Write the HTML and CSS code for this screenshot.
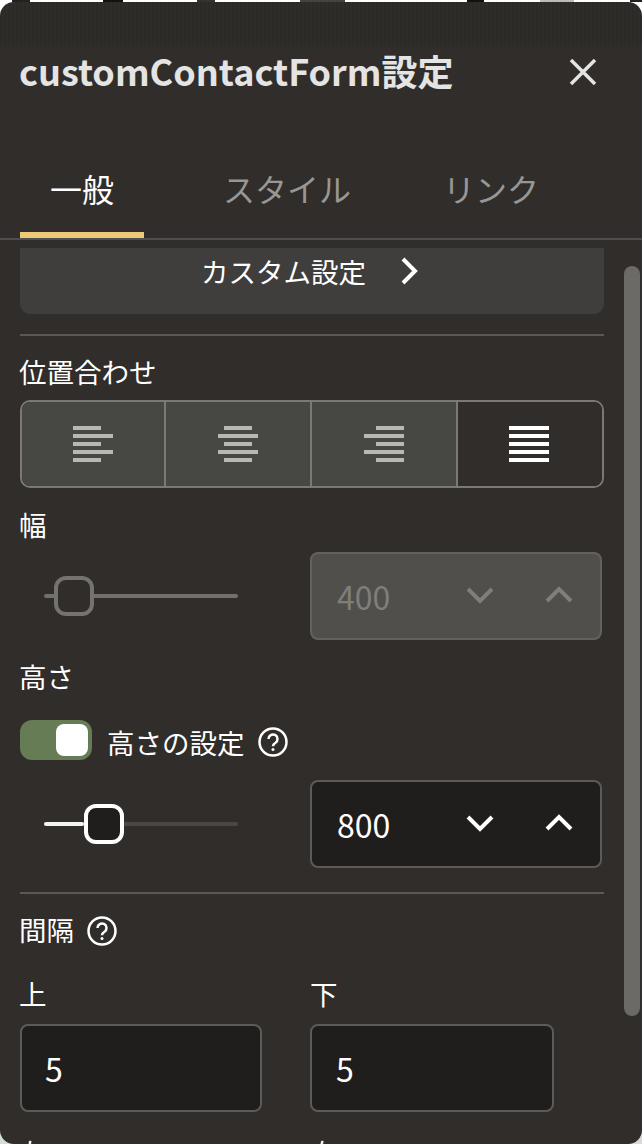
FILE: index.html
```html
<!DOCTYPE html>
<html lang="ja">
<head>
    <meta charset="UTF-8">
    <meta name="viewport" content="width=device-width, initial-scale=1.0">
    <title>customContactForm設定</title>
    <link rel="stylesheet" href="styles.css">
</head>
<body>
    <div class="page-behind"></div>

    <div class="panel">
        <div class="panel-head">
            <div class="panel-title">customContactForm設定</div>
            <svg class="close-icon" width="28" height="28" viewBox="0 0 28 28">
                <path d="M2 2L26 26M26 2L2 26"/>
            </svg>
        </div>

        <div class="tabs">
            <div class="tab tab-active">一般</div>
            <div class="tab tab-style">スタイル</div>
            <div class="tab tab-link">リンク</div>
        </div>

        <div class="scroll-area">
            <div class="custom-btn">
                <span>カスタム設定</span>
                <svg class="chevron-right" width="18" height="28" viewBox="0 0 18 28">
                    <path d="M3 2L15 14L3 26"/>
                </svg>
            </div>

            <div class="divider"></div>

            <div class="label label-first">位置合わせ</div>
            <div class="align-group">
                <div class="align-btn">
                    <div class="bars bars-left"><i></i><i></i><i></i><i></i><i></i></div>
                </div>
                <div class="align-btn">
                    <div class="bars bars-center"><i></i><i></i><i></i><i></i><i></i></div>
                </div>
                <div class="align-btn">
                    <div class="bars bars-right"><i></i><i></i><i></i><i></i><i></i></div>
                </div>
                <div class="align-btn align-active">
                    <div class="bars bars-full"><i></i><i></i><i></i><i></i><i></i></div>
                </div>
            </div>

            <div class="label label-width">幅</div>
            <div class="slider-row is-disabled">
                <div class="slider">
                    <div class="track">
                        <div class="thumb"></div>
                    </div>
                </div>
                <div class="number-box">
                    <span class="number-value">400</span>
                    <svg class="stepper" width="28" height="18" viewBox="0 0 28 18"><path d="M2 3L14 15L26 3"/></svg>
                    <svg class="stepper" width="28" height="18" viewBox="0 0 28 18"><path d="M2 15L14 3L26 15"/></svg>
                </div>
            </div>

            <div class="label label-height">高さ</div>
            <div class="toggle-row">
                <div class="toggle"><div class="toggle-knob"></div></div>
                <span class="toggle-text">高さの設定</span>
                <svg class="help-icon" width="30" height="30" viewBox="0 0 30 30">
                    <circle cx="15" cy="15" r="13.5"/>
                    <path d="M10.5 12a4.5 4.5 0 1 1 7 3.7c-1.6 1-2.5 1.8-2.5 3.6"/>
                    <circle class="help-dot" cx="15" cy="22.5" r="1.5"/>
                </svg>
            </div>
            <div class="slider-row slider-row-active">
                <div class="slider">
                    <div class="track">
                        <div class="track-fill"></div>
                        <div class="thumb thumb-active"></div>
                    </div>
                </div>
                <div class="number-box">
                    <span class="number-value">800</span>
                    <svg class="stepper" width="28" height="18" viewBox="0 0 28 18"><path d="M2 3L14 15L26 3"/></svg>
                    <svg class="stepper" width="28" height="18" viewBox="0 0 28 18"><path d="M2 15L14 3L26 15"/></svg>
                </div>
            </div>

            <div class="divider divider-spacing"></div>

            <div class="label label-spacing">
                間隔
                <svg class="help-icon" width="30" height="30" viewBox="0 0 30 30">
                    <circle cx="15" cy="15" r="13.5"/>
                    <path d="M10.5 12a4.5 4.5 0 1 1 7 3.7c-1.6 1-2.5 1.8-2.5 3.6"/>
                    <circle class="help-dot" cx="15" cy="22.5" r="1.5"/>
                </svg>
            </div>
            <div class="spacing-grid">
                <div class="spacing-item">
                    <div class="label">上</div>
                    <div class="spacing-input">5</div>
                </div>
                <div class="spacing-item">
                    <div class="label">下</div>
                    <div class="spacing-input">5</div>
                </div>
                <div class="spacing-item">
                    <div class="label">左</div>
                </div>
                <div class="spacing-item">
                    <div class="label">右</div>
                </div>
            </div>
        </div>

        <div class="scrollbar"></div>
    </div>
</body>
</html>
```

FILE: styles.css
```css
html,
body {
    margin: 0;
    padding: 0;
    height: 1144px;
    overflow: hidden;
}

body {
    font-family: "Noto Sans CJK JP", "Noto Sans", sans-serif;
    background: linear-gradient(#ffffff 50%, #d3dcd9 50%);
    color: #ffffff;
}

/* the page under the panel, only its last 2px show */
.page-behind {
    height: 2px;
    background: linear-gradient(90deg,
        #fff 0, #fff 12px, #222 12px, #222 30px, #fff 30px, #fff 103px,
        #111 103px, #111 123px, #fff 123px, #fff 197px,
        #333 197px, #333 215px, #fff 215px, #fff 300px,
        #444 300px, #444 345px, #fff 345px, #fff 467px,
        #111 467px, #111 484px, #fff 484px, #fff 540px,
        #bbb 540px, #bbb 574px, #fff 574px, #fff 630px,
        #222 630px);
}

.panel {
    position: relative;
    height: 1142px;
    border-radius: 14px;
    overflow: hidden;
    background:
        repeating-linear-gradient(90deg, #2c2a27 0, #2c2a27 2px, #2f2c29 2px, #2f2c29 4px) top / 100% 43px no-repeat,
        #302d2a;
}

.panel-head {
    display: flex;
    align-items: center;
    justify-content: space-between;
    height: 54px;
    padding: 43px 45px 0 20px;
}

.panel-title {
    margin-left: -1px;
    margin-bottom: 4px;
    font-size: 36px;
    font-weight: 700;
    line-height: 54px;
    color: #e4e4e4;
    white-space: nowrap;
}

.close-icon path {
    fill: none;
    stroke: #e4e4e4;
    stroke-width: 3.5;
}

.tabs {
    display: flex;
    height: 96px;
    margin-top: 43px;
    padding-left: 20px;
    border-bottom: 2px solid #4e4e50;
}

.tab {
    padding: 0 30px;
    font-size: 32px;
    line-height: 92px;
    color: #989794;
}

.tab-active {
    color: #ffffff;
    box-shadow: inset 0 -6px 0 #edc978;
}

.tab-style {
    margin-left: 49px;
}

.tab-link {
    margin-left: 32px;
}

.scroll-area {
    height: 896px;
    margin-top: 8px;
    padding: 0 38px 0 20px;
    overflow: hidden;
}

.custom-btn {
    display: flex;
    align-items: flex-start;
    justify-content: center;
    gap: 34px;
    height: 66px;
    padding-right: 5px;
    border-radius: 0 0 10px 10px;
    background-color: #403e3c;
    font-size: 27.5px;
    line-height: 46px;
}

.chevron-right {
    margin-top: 9px;
}

.chevron-right path {
    fill: none;
    stroke: #ffffff;
    stroke-width: 4;
}

.divider {
    height: 2px;
    margin-top: 20px;
    background-color: #5a595a;
}

.divider-spacing {
    margin-top: 24px;
}

.label {
    height: 40px;
    margin-left: -1px;
    font-size: 27.5px;
    line-height: 37px;
}

.label-first {
    margin-top: 17px;
}

.label-width {
    margin-top: 18px;
}

.label-height {
    margin-top: 18px;
}

.label-spacing {
    display: flex;
    align-items: flex-start;
    gap: 13px;
    margin-top: 17px;
}

.label-spacing .help-icon {
    margin-top: 5px;
}

.align-group {
    display: grid;
    grid-template-columns: 142px 146px 146px 146px;
    height: 84px;
    margin-top: 7px;
    border: 2px solid #7a7976;
    border-radius: 10px;
    overflow: hidden;
}

.align-btn {
    display: flex;
    align-items: center;
    justify-content: center;
    background-color: #474744;
    border-left: 2px solid #7a7976;
}

.align-btn:first-child {
    border-left: none;
}

.align-active {
    padding-right: 2px;
    background-color: #302d2b;
}

.bars {
    display: flex;
    flex-direction: column;
    gap: 4px;
    width: 40px;
}

.bars i {
    display: block;
    width: 28px;
    height: 4px;
    background-color: #b8b7b3;
}

.bars i:nth-child(even) {
    width: 40px;
}

.bars-center {
    align-items: center;
}

.bars-right {
    align-items: flex-end;
}

.bars-full i {
    width: 40px;
    background-color: #ffffff;
}

.slider-row {
    display: flex;
    height: 88px;
    margin-top: 6px;
}

.slider-row-active {
    margin-top: 20px;
}

.slider {
    display: flex;
    align-items: center;
    width: 290px;
    padding-left: 24px;
    box-sizing: border-box;
}

.track {
    position: relative;
    width: 194px;
    height: 4px;
    border-radius: 2px;
    background-color: #72706d;
}

.slider-row-active .track {
    background-color: #4a4845;
}

.track-fill {
    width: 40px;
    height: 4px;
    border-radius: 2px;
    background-color: #f2f2f0;
}

.thumb {
    position: absolute;
    top: -18px;
    left: 10px;
    width: 40px;
    height: 40px;
    box-sizing: border-box;
    border: 4px solid #75736f;
    border-radius: 12px;
    background-color: #302d2a;
}

.thumb-active {
    left: 40px;
    border-color: #ffffff;
    background-color: #1f1e1c;
}

.number-box {
    display: flex;
    align-items: center;
    gap: 51px;
    width: 292px;
    box-sizing: border-box;
    padding: 0 27px 0 25px;
    border: 2px solid #5c5b59;
    border-radius: 8px;
    background-color: #1f1e1c;
}

.number-value {
    flex: 1;
    font-size: 32px;
    line-height: 88px;
    color: #ffffff;
}

.stepper {
    flex: none;
    margin-top: -3px;
}

.stepper path {
    fill: none;
    stroke: #ffffff;
    stroke-width: 4;
}

.is-disabled .number-box {
    border-color: #62615d;
    background-color: #504f4b;
}

.is-disabled .number-value {
    color: #7f7e7a;
}

.is-disabled .stepper path {
    stroke: #7f7e7a;
}

.toggle-row {
    display: flex;
    align-items: center;
    height: 40px;
    margin-top: 22px;
}

.toggle {
    display: flex;
    justify-content: flex-end;
    width: 72px;
    height: 40px;
    box-sizing: border-box;
    padding: 4px;
    border-radius: 12px;
    background-color: #667c54;
}

.toggle-knob {
    width: 32px;
    height: 32px;
    border-radius: 8px;
    background-color: #ffffff;
}

.toggle-text {
    margin: 4px 0 0 15px;
    font-size: 27.5px;
    line-height: 40px;
}

.toggle-row .help-icon {
    margin: 4px 0 0 13px;
}

.help-icon {
    flex: none;
}

.help-icon circle,
.help-icon path {
    fill: none;
    stroke: #ffffff;
    stroke-width: 2.5;
}

.help-icon .help-dot {
    fill: #ffffff;
    stroke: none;
}

.spacing-grid {
    display: grid;
    grid-template-columns: 242px 244px;
    column-gap: 48px;
    row-gap: 22px;
    margin-top: 24px;
}

.spacing-item:nth-child(even) .label {
    margin-left: 0;
}

.spacing-item:nth-child(even) .spacing-input {
    padding-left: 24px;
}

.spacing-input {
    height: 88px;
    margin-top: 9px;
    box-sizing: border-box;
    padding-left: 23px;
    border: 2px solid #5c5b59;
    border-radius: 8px;
    background-color: #1f1e1c;
    font-size: 32px;
    line-height: 84px;
}

.scrollbar {
    position: absolute;
    top: 264px;
    right: 2px;
    width: 16px;
    height: 750px;
    border-radius: 8px;
    background-color: #6b6a66;
}
```
